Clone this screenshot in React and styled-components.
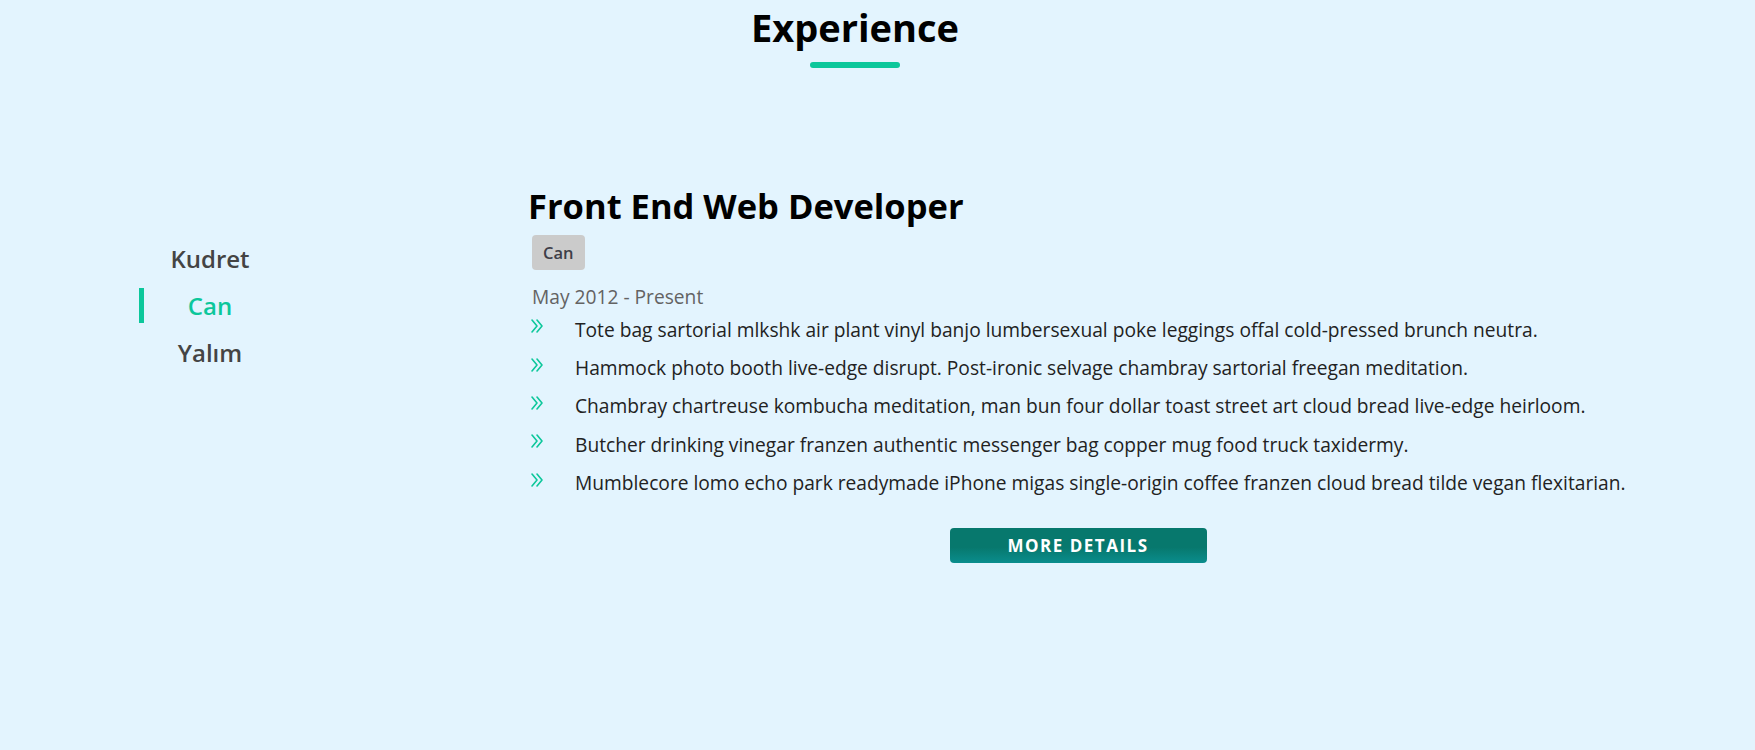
import React from "react";
import styled, { createGlobalStyle } from "styled-components";

const GlobalStyle = createGlobalStyle`
    body {
        margin: 0;
        background: #e3f4fe;
        font-family: "Open Sans", "Noto Sans", sans-serif;
    }
`;

const Section = styled.section`
    min-height: 750px;
    box-sizing: border-box;
    padding-top: 2px;
`;

const Heading = styled.div`
    display: flex;
    flex-direction: column;
    align-items: center;
    padding-right: 45px;
`;

const Title = styled.h2`
    margin: 0;
    font-size: 38px;
    line-height: 50px;
    font-weight: 700;
    color: #000;
`;

const Underline = styled.div`
    width: 90px;
    height: 6px;
    border-radius: 3px;
    background: #0cc79b;
    margin-top: 10px;
`;

const Body = styled.div`
    display: flex;
    margin-top: 115px;
    padding-left: 139px;
`;

const TabList = styled.div`
    width: 142px;
    margin-top: 52px;
    display: flex;
    flex-direction: column;
`;

const Tab = styled.div`
    position: relative;
    height: 47px;
    display: flex;
    align-items: center;
    justify-content: center;
    font-size: 24px;
    font-weight: 600;
    color: ${props => (props.active ? "#0cc79b" : "#444")};
    cursor: pointer;

    &::before {
        content: "";
        display: ${props => (props.active ? "block" : "none")};
        position: absolute;
        left: 0;
        top: 6px;
        width: 5px;
        height: 35px;
        background: #0cc79b;
    }
`;

const Job = styled.div`
    width: 1100px;
    margin-left: 247px;
    display: flex;
    flex-direction: column;
`;

const JobTitle = styled.h3`
    margin: 0;
    font-size: 34.5px;
    line-height: 46px;
    font-weight: 700;
    color: #000;
`;

const Chip = styled.span`
    align-self: flex-start;
    margin: 6px 0 0 4px;
    padding: 0 11px;
    height: 35px;
    line-height: 35px;
    border-radius: 4px;
    background: #cbcbcb;
    color: #3e3e48;
    font-size: 16.5px;
    font-weight: 600;
`;

const Dates = styled.div`
    margin: 13px 0 0 4px;
    font-size: 19.2px;
    font-weight: 500;
    color: #636363;
`;

const List = styled.ul`
    list-style: none;
    margin: 0;
    padding: 0;
`;

const Item = styled.li`
    display: flex;
    align-items: center;
    height: 38.4px;
    font-size: 19.2px;
    color: #222;
`;

const Arrow = styled.svg`
    flex: none;
    width: 14px;
    height: 16px;
    margin: -6px 31px 0 2px;
`;

const MoreButton = styled.button`
    align-self: center;
    margin-top: 26px;
    width: 257px;
    height: 35px;
    border: none;
    border-radius: 4px;
    background: linear-gradient(#07786d 0%, #07786d 55%, #0a8d8d 100%);
    color: #fff;
    font-family: inherit;
    font-size: 17px;
    font-weight: 700;
    letter-spacing: 1.5px;
    cursor: pointer;
`;

const tabs = ["Kudret", "Can", "Yalım"];

const duties = [
    "Tote bag sartorial mlkshk air plant vinyl banjo lumbersexual poke leggings offal cold-pressed brunch neutra.",
    "Hammock photo booth live-edge disrupt. Post-ironic selvage chambray sartorial freegan meditation.",
    "Chambray chartreuse kombucha meditation, man bun four dollar toast street art cloud bread live-edge heirloom.",
    "Butcher drinking vinegar franzen authentic messenger bag copper mug food truck taxidermy.",
    "Mumblecore lomo echo park readymade iPhone migas single-origin coffee franzen cloud bread tilde vegan flexitarian.",
];

function DoubleChevron() {
    return (
        <Arrow viewBox="0 0 14 16" fill="none" stroke="#0cc79b" strokeWidth="1.6" strokeLinecap="round" strokeLinejoin="round">
            <polyline points="2,2 7,8 2,14" />
            <polyline points="7,2 12,8 7,14" />
        </Arrow>
    );
}

export default function App() {
    const [active, setActive] = React.useState(1);
    return (
        <Section>
            <GlobalStyle />
            <Heading>
                <Title>Experience</Title>
                <Underline />
            </Heading>
            <Body>
                <TabList>
                    {tabs.map((t, i) => (
                        <Tab key={t} active={i === active} onClick={() => setActive(i)}>{t}</Tab>
                    ))}
                </TabList>
                <Job>
                    <JobTitle>Front End Web Developer</JobTitle>
                    <Chip>{tabs[active]}</Chip>
                    <Dates>May 2012 - Present</Dates>
                    <List>
                        {duties.map(d => (
                            <Item key={d}>
                                <DoubleChevron />
                                {d}
                            </Item>
                        ))}
                    </List>
                    <MoreButton>MORE DETAILS</MoreButton>
                </Job>
            </Body>
        </Section>
    );
}
